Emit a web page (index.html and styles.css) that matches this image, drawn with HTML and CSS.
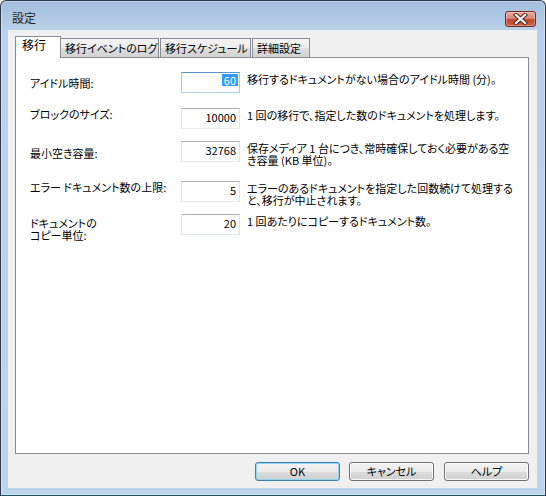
FILE: index.html
```html
<!DOCTYPE html>
<html lang="ja">
<head>
<meta charset="utf-8">
<title>設定</title>
<link rel="stylesheet" href="styles.css">
</head>
<body>
<div class="window">
  <div class="titlebar">
    <span class="title">設定</span>
    <div class="close">
      <svg width="15" height="12" viewBox="0 0 15 12">
        <path d="M3 2 L12 10 M12 2 L3 10" stroke="#5b2520" stroke-width="4.2" stroke-linecap="square"/>
        <path d="M3 2 L12 10 M12 2 L3 10" stroke="#ffffff" stroke-width="2.2" stroke-linecap="square"/>
      </svg>
    </div>
  </div>
  <div class="client">
    <div class="tabs">
      <div class="tab active">移行</div>
      <div class="tab t2">移行イベントのログ</div>
      <div class="tab t3">移行スケジュール</div>
      <div class="tab t4">詳細設定</div>
    </div>
    <div class="panel">
      <div class="form">
        <div class="label off5">アイドル時間:</div>
        <div class="field focus"><span class="val sel">60</span></div>
        <div class="desc">移行するドキュメントがない場合のアイドル時間 (分)。</div>

        <div class="label">ブロックのサイズ:</div>
        <div class="field"><span class="val">10000</span></div>
        <div class="desc">1 回の移行で、指定した数のドキュメントを処理します。</div>

        <div class="label off6">最小空き容量:</div>
        <div class="field"><span class="val">32768</span></div>
        <div class="desc">保存メディア 1 台につき、常時確保しておく必要がある空<br>き容量 (KB 単位)。</div>

        <div class="label">エラー ドキュメント数の上限:</div>
        <div class="field"><span class="val">5</span></div>
        <div class="desc">エラーのあるドキュメントを指定した回数続けて処理する<br>と、移行が中止されます。</div>

        <div class="label off3">ドキュメントの<br>コピー単位:</div>
        <div class="field"><span class="val">20</span></div>
        <div class="desc">1 回あたりにコピーするドキュメント数。</div>
      </div>
    </div>
    <div class="buttons">
      <div class="btn default">OK</div>
      <div class="btn cancel">キャンセル</div>
      <div class="btn help">ヘルプ</div>
    </div>
  </div>
</div>
</body>
</html>
```

FILE: styles.css
```css
* { box-sizing: border-box; }

html, body {
  margin: 0;
  padding: 0;
  background: #ffffff;
}

body {
  font-family: "Noto Sans CJK JP", "Noto Sans", sans-serif;
  font-size: 11px;
  line-height: 12px;
  font-feature-settings: "palt";
  color: #000000;
}

.window {
  width: 546px;
  height: 496px;
  border: 1px solid #2a3a4c;
  border-bottom-color: #1d5266;
  border-radius: 6px 6px 0 0;
  background: linear-gradient(#a3bddb 0px, #b9d1ea 29px, #bcd4ec 100%);
  box-shadow: inset 0 0 0 1px rgba(255, 255, 255, 0.35);
  display: flex;
  flex-direction: column;
}

.titlebar {
  height: 29px;
  flex: none;
  display: flex;
  justify-content: space-between;
  align-items: flex-start;
  padding: 11px 9px 0 11px;
}

.title {
  color: #1e1e1e;
  font-size: 12px;
}

.close {
  margin-top: -1px;
  width: 31px;
  height: 16px;
  border: 1px solid #6b2a22;
  border-radius: 3px;
  background: linear-gradient(#e6a899 0%, #d98875 45%, #c5452f 55%, #cd6247 100%);
  box-shadow: inset 0 0 0 1px rgba(255, 255, 255, 0.3);
  display: flex;
  align-items: center;
  justify-content: center;
}

.close svg { display: block; }

.client {
  flex: 1;
  margin: 0 8px 7px 7px;
  background: #f0f0f0;
  padding: 6px 8px 0 7px;
  display: flex;
  flex-direction: column;
}

.tabs {
  height: 21px;
  flex: none;
  display: flex;
  align-items: flex-end;
}

.tab {
  height: 19px;
  border: 1px solid #898c95;
  border-bottom: none;
  background: linear-gradient(#f4f4f4 0%, #ececec 50%, #dedede 50%, #d2d2d2 100%);
  padding: 3px 0 0 4px;
  white-space: nowrap;
  overflow: hidden;
}

.tab.active {
  width: 46px;
  height: 22px;
  margin-bottom: -1px;
  background: #ffffff;
  padding: 2px 0 0 6px;
  position: relative;
  z-index: 1;
  font-size: 12px;
}

.t2 { width: 99px; margin-left: -1px; }
.t3 { width: 91px; margin-left: 1px; }
.t4 { width: 58px; margin-left: 1px; }

.panel {
  flex: none;
  height: 397px;
  border: 1px solid #898c95;
  background: #ffffff;
  padding: 14px 0 0 14px;
}

.form {
  display: grid;
  grid-template-columns: 151px 59px auto;
  grid-template-rows: 36px 33px 40px 33px auto;
  align-items: start;
}

.label { white-space: nowrap; }
.off3 { padding-top: 3px; }
.off5 { padding-top: 5px; }
.off6 { padding-top: 6px; }

.field {
  width: 59px;
  height: 21px;
  border: 1px solid;
  border-color: #abadb3 #e2e3ea #e3e9ef #e2e3ea;
  background: #ffffff;
  display: flex;
  justify-content: flex-end;
  align-items: flex-start;
  padding: 2px 3px 0 0;
}

.field.focus {
  border-color: #5c93c9 #a7c7e8 #b3d0ee #a7c7e8;
}

.val {
  line-height: 12px;
  font-size: 11px;
}

.sel {
  background: #3399ff;
  color: #ffffff;
  padding: 0 2px;
  margin: -1px -2px 0 0;
}

.desc {
  padding: 1px 0 0 7px;
  white-space: nowrap;
}

.buttons {
  display: flex;
  justify-content: flex-end;
  margin-top: 8px;
}

.btn {
  width: 85px;
  height: 19px;
  border: 1px solid #707070;
  border-radius: 3px;
  background: linear-gradient(#f2f2f2 0%, #ebebeb 50%, #dddddd 50%, #cfcfcf 100%);
  box-shadow: inset 0 0 0 1px #fbfbfb;
  text-align: center;
  line-height: 17px;
}

.btn.default {
  border-color: #3c7fb1;
  box-shadow: inset 0 0 0 1px #8fd7f5;
}

.cancel { margin-left: 9px; }
.help { margin-left: 10px; }
```
